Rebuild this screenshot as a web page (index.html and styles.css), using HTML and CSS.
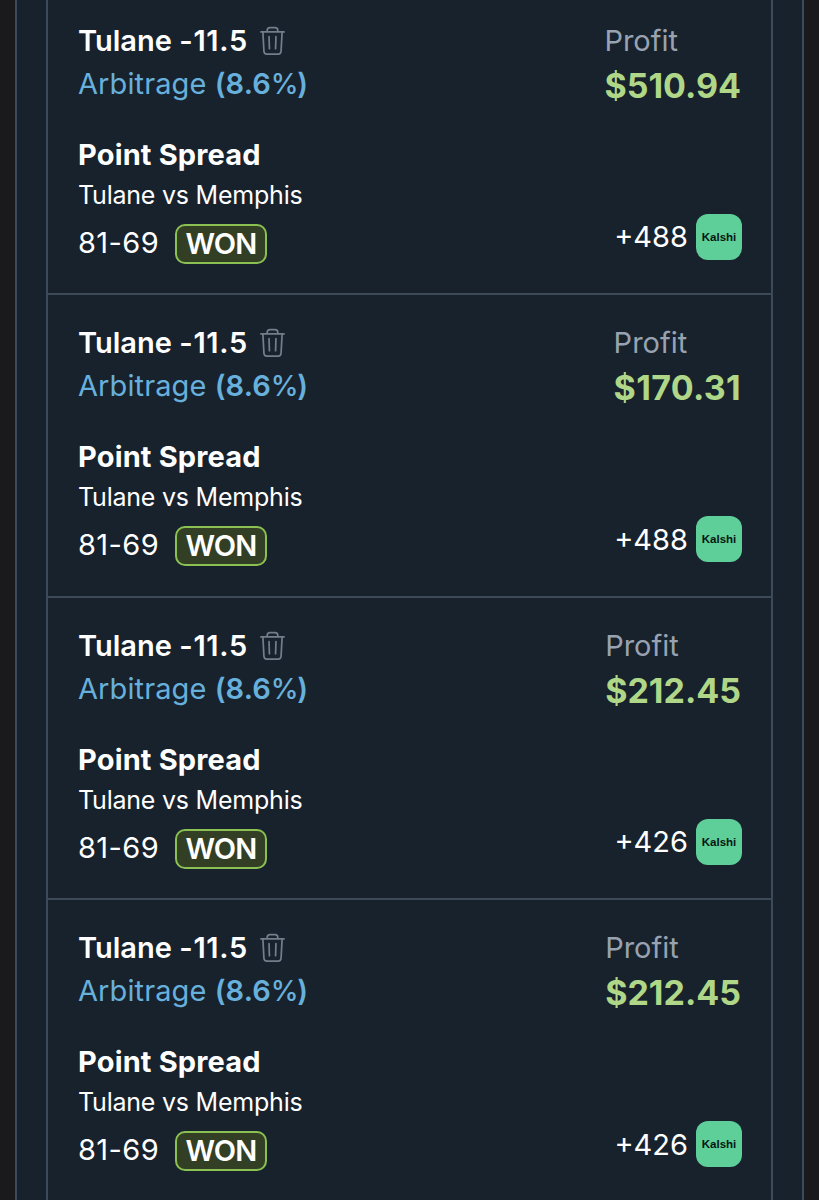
FILE: index.html
```html
<!DOCTYPE html>
<html lang="en">
<head>
    <meta charset="UTF-8">
    <meta name="viewport" content="width=device-width, initial-scale=1.0">
    <title>Bet Tracker</title>
    <link rel="stylesheet" href="styles.css">
</head>
<body>
    <!-- Trash icon shared by every bet -->
    <svg class="sprite" width="0" height="0">
        <symbol id="trash" viewBox="0 0 26 30">
            <path d="M1 5.6H25M7.5 5.6V4Q7.5 1.2 10.3 1.2H15.7Q18.5 1.2 18.5 4V5.6M3 5.6L4.1 25.6Q4.3 28.6 7.1 28.6H18.9Q21.7 28.6 21.9 25.6L23 5.6M9.4 10.5L9.8 23M16.6 10.5L16.2 23"/>
        </symbol>
    </svg>

    <div class="panel">
        <div class="bet-list">
            <div class="bet">
                <div class="bet-top">
                    <div>
                        <div class="pick"><div>Tulane <span class="line">-11.5</span></div><svg class="trash"><use href="#trash"/></svg></div>
                        <div class="type">Arbitrage <b>(8.6<span class="percent">%</span>)</b></div>
                    </div>
                    <div class="profit">
                        <div class="profit-label">Profit</div>
                        <div class="profit-value">$510.94</div>
                    </div>
                </div>
                <div class="bet-bottom">
                    <div>
                        <div class="market">Point Spread</div>
                        <div class="matchup">Tulane vs Memphis</div>
                        <div class="result"><span class="score">81-69</span><span class="badge">WON</span></div>
                    </div>
                    <div class="odds"><span>+488</span><div class="book">Kalshi</div></div>
                </div>
            </div>

            <div class="bet">
                <div class="bet-top">
                    <div>
                        <div class="pick"><div>Tulane <span class="line">-11.5</span></div><svg class="trash"><use href="#trash"/></svg></div>
                        <div class="type">Arbitrage <b>(8.6<span class="percent">%</span>)</b></div>
                    </div>
                    <div class="profit">
                        <div class="profit-label">Profit</div>
                        <div class="profit-value wide">$170.31</div>
                    </div>
                </div>
                <div class="bet-bottom">
                    <div>
                        <div class="market">Point Spread</div>
                        <div class="matchup">Tulane vs Memphis</div>
                        <div class="result"><span class="score">81-69</span><span class="badge">WON</span></div>
                    </div>
                    <div class="odds"><span>+488</span><div class="book">Kalshi</div></div>
                </div>
            </div>

            <div class="bet">
                <div class="bet-top">
                    <div>
                        <div class="pick"><div>Tulane <span class="line">-11.5</span></div><svg class="trash"><use href="#trash"/></svg></div>
                        <div class="type">Arbitrage <b>(8.6<span class="percent">%</span>)</b></div>
                    </div>
                    <div class="profit">
                        <div class="profit-label">Profit</div>
                        <div class="profit-value">$212.45</div>
                    </div>
                </div>
                <div class="bet-bottom">
                    <div>
                        <div class="market">Point Spread</div>
                        <div class="matchup">Tulane vs Memphis</div>
                        <div class="result"><span class="score">81-69</span><span class="badge">WON</span></div>
                    </div>
                    <div class="odds"><span>+426</span><div class="book">Kalshi</div></div>
                </div>
            </div>

            <div class="bet">
                <div class="bet-top">
                    <div>
                        <div class="pick"><div>Tulane <span class="line">-11.5</span></div><svg class="trash"><use href="#trash"/></svg></div>
                        <div class="type">Arbitrage <b>(8.6<span class="percent">%</span>)</b></div>
                    </div>
                    <div class="profit">
                        <div class="profit-label">Profit</div>
                        <div class="profit-value">$212.45</div>
                    </div>
                </div>
                <div class="bet-bottom">
                    <div>
                        <div class="market">Point Spread</div>
                        <div class="matchup">Tulane vs Memphis</div>
                        <div class="result"><span class="score">81-69</span><span class="badge">WON</span></div>
                    </div>
                    <div class="odds"><span>+426</span><div class="book">Kalshi</div></div>
                </div>
            </div>
        </div>
    </div>
</body>
</html>
```
FILE: styles.css
```css
* {
    box-sizing: border-box;
}
body {
    margin: 0;
    height: 1200px;
    overflow: hidden;
    background-color: #1a191c;
    color: #fff;
    font-family: Inter, sans-serif;
    font-size: 29px;
}
.sprite {
    display: none;
}
.panel {
    height: 1200px;
    margin: 0 15px;
    padding: 0 29px;
    border: solid #3d4a5a;
    border-width: 0 2px;
    background-color: #17222d;
    overflow: hidden;
}
.bet-list {
    margin-top: -7.5px;
    border: solid #3d4a5a;
    border-width: 0 2px;
}
.bet {
    height: 302.5px;
    padding: 26px 29px 0 30px;
    border-bottom: 2px solid #3d4a5a;
}
.bet-top, .bet-bottom {
    display: flex;
    justify-content: space-between;
}
.bet-bottom {
    margin-top: 25px;
    align-items: flex-end;
}
.pick {
    display: flex;
    align-items: center;
    gap: 12px;
    height: 43px;
    font-weight: 600;
}
.line {
    letter-spacing: 0.7px;
}
.trash {
    width: 25px;
    height: 30px;
    margin-top: 1px;
    fill: none;
    stroke: #727e8b;
    stroke-width: 1.8;
    stroke-linecap: round;
    stroke-linejoin: round;
}
.type {
    line-height: 43px;
    letter-spacing: 0.1px;
    color: #68b0dc;
}
.type b {
    font-weight: 600;
}
.type .percent {
    font-size: 28px;
    font-weight: 500;
    letter-spacing: -1.5px;
}
.profit {
    padding-right: 1px;
}
.profit-label {
    line-height: 43px;
    color: #98a2b0;
}
.profit-value {
    line-height: 47px;
    font-size: 34px;
    font-weight: 700;
    color: #afd787;
}
.profit-value.wide {
    letter-spacing: 0.3px;
}
.market {
    line-height: 41px;
    font-weight: 700;
    letter-spacing: 0.15px;
}
.matchup {
    line-height: 41px;
    font-size: 25px;
    letter-spacing: -0.22px;
}
.result {
    display: flex;
    align-items: center;
    margin-top: 8px;
    height: 40px;
}
.score {
    width: 97px;
    margin-top: -3px;
    letter-spacing: 0.4px;
}
.badge {
    width: 92px;
    height: 40px;
    border: 2px solid #8bc052;
    border-radius: 10px;
    background-color: #323f24;
    line-height: 36px;
    text-align: center;
    font-weight: 600;
    letter-spacing: -0.8px;
}
.odds {
    display: flex;
    align-items: center;
    gap: 8px;
    margin-bottom: 4px;
}
.book {
    width: 46px;
    height: 46px;
    border-radius: 12px;
    background-color: #5fcf9a;
    color: #08160f;
    line-height: 46px;
    text-align: center;
    font-family: "Liberation Sans", Arial, sans-serif;
    font-size: 11.5px;
    font-weight: 700;
}
```
